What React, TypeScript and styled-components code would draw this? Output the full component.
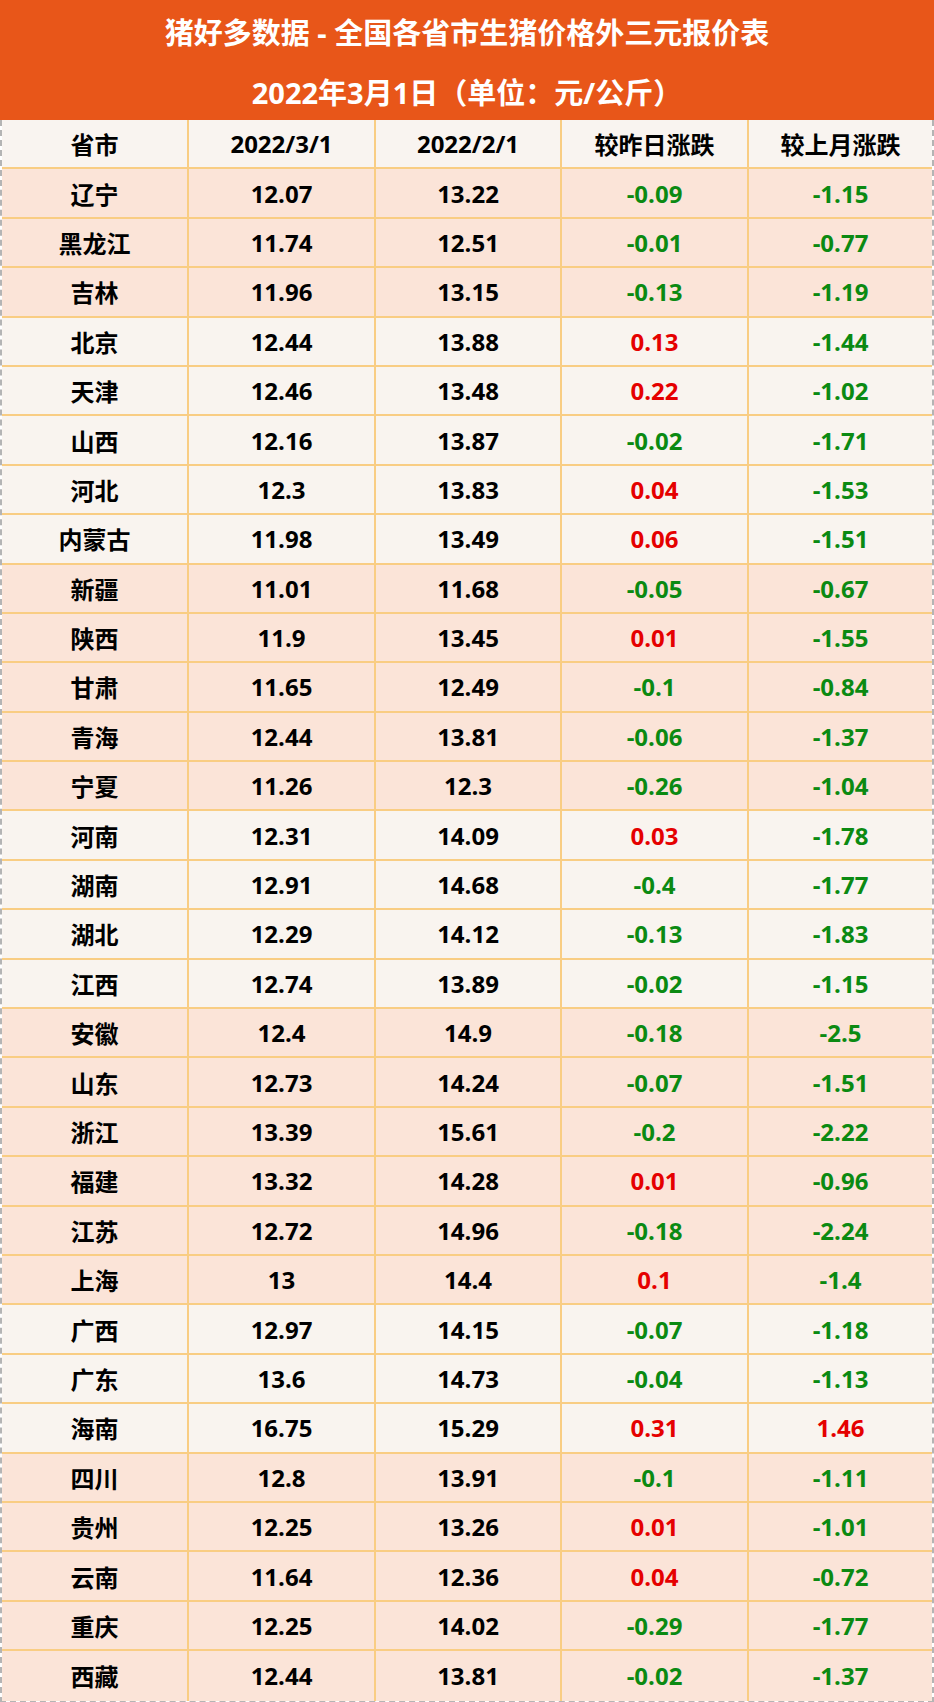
import React from "react";
import styled, { createGlobalStyle } from "styled-components";

interface PriceRow {
    name: string;
    march: string;
    feb: string;
    day: string;
    month: string;
    tone: "pink" | "light";
}

const GlobalStyle = createGlobalStyle`
    html, body {
        margin: 0;
        padding: 0;
        background: #ffffff;
    }
`;

const Page = styled.main`
    width: 934px;
    font-family: "Open Sans", "Noto Sans CJK SC", sans-serif;
    font-weight: 700;
`;

const Banner = styled.header`
    height: 120px;
    background: #e85619;
    color: #ffffff;
    display: flex;
    flex-direction: column;
    align-items: center;
`;

const BannerLine = styled.div<{ $h: number; $size: number }>`
    height: ${(p) => p.$h}px;
    font-size: ${(p) => p.$size}px;
    display: flex;
    align-items: center;
    justify-content: center;
    white-space: pre;
`;

const Table = styled.section`
    border-left: 2px dashed #b4b4b4;
    border-right: 2px dashed #b4b4b4;
    border-bottom: 2px dashed #b4b4b4;
    box-sizing: border-box;
`;

const Row = styled.div<{ $bg: string; $last?: boolean }>`
    display: grid;
    grid-template-columns: 185px 187px 186px 187px 185px;
    height: 49.4px;
    box-sizing: border-box;
    background: ${(p) => p.$bg};
    border-bottom: ${(p) => (p.$last ? "none" : "2px solid #f9cd83")};
`;

const Cell = styled.div<{ $color?: string }>`
    display: flex;
    align-items: center;
    justify-content: center;
    font-size: 24px;
    color: ${(p) => p.$color || "#000000"};
    & + & {
        border-left: 2px solid #f9cd83;
    }
`;

const colours = {
    pink: "#fbe4d8",
    light: "#f9f4ef",
};

const raw: [string, string, string, string, string][] = [
    ["辽宁", "12.07", "13.22", "-0.09", "-1.15"],
    ["黑龙江", "11.74", "12.51", "-0.01", "-0.77"],
    ["吉林", "11.96", "13.15", "-0.13", "-1.19"],
    ["北京", "12.44", "13.88", "0.13", "-1.44"],
    ["天津", "12.46", "13.48", "0.22", "-1.02"],
    ["山西", "12.16", "13.87", "-0.02", "-1.71"],
    ["河北", "12.3", "13.83", "0.04", "-1.53"],
    ["内蒙古", "11.98", "13.49", "0.06", "-1.51"],
    ["新疆", "11.01", "11.68", "-0.05", "-0.67"],
    ["陕西", "11.9", "13.45", "0.01", "-1.55"],
    ["甘肃", "11.65", "12.49", "-0.1", "-0.84"],
    ["青海", "12.44", "13.81", "-0.06", "-1.37"],
    ["宁夏", "11.26", "12.3", "-0.26", "-1.04"],
    ["河南", "12.31", "14.09", "0.03", "-1.78"],
    ["湖南", "12.91", "14.68", "-0.4", "-1.77"],
    ["湖北", "12.29", "14.12", "-0.13", "-1.83"],
    ["江西", "12.74", "13.89", "-0.02", "-1.15"],
    ["安徽", "12.4", "14.9", "-0.18", "-2.5"],
    ["山东", "12.73", "14.24", "-0.07", "-1.51"],
    ["浙江", "13.39", "15.61", "-0.2", "-2.22"],
    ["福建", "13.32", "14.28", "0.01", "-0.96"],
    ["江苏", "12.72", "14.96", "-0.18", "-2.24"],
    ["上海", "13", "14.4", "0.1", "-1.4"],
    ["广西", "12.97", "14.15", "-0.07", "-1.18"],
    ["广东", "13.6", "14.73", "-0.04", "-1.13"],
    ["海南", "16.75", "15.29", "0.31", "1.46"],
    ["四川", "12.8", "13.91", "-0.1", "-1.11"],
    ["贵州", "12.25", "13.26", "0.01", "-1.01"],
    ["云南", "11.64", "12.36", "0.04", "-0.72"],
    ["重庆", "12.25", "14.02", "-0.29", "-1.77"],
    ["西藏", "12.44", "13.81", "-0.02", "-1.37"],
];

// region groups: which rows sit on the lighter band
const lightRows = new Set(["北京", "天津", "山西", "河北", "内蒙古", "河南", "湖南", "湖北", "江西", "广西", "广东", "海南"]);

const rows: PriceRow[] = raw.map(([name, march, feb, day, month]) => ({
    name,
    march,
    feb,
    day,
    month,
    tone: lightRows.has(name) ? "light" : "pink",
}));

const changeColour = (v: string) => (v.startsWith("-") ? "#0b8a12" : "#e50000");

function App() {
    return (
        <Page>
            <GlobalStyle />
            <Banner>
                <BannerLine $h={62} $size={29}>猪好多数据 - 全国各省市生猪价格外三元报价表</BannerLine>
                <BannerLine $h={58} $size={29}>2022年3月1日（单位：元/公斤）</BannerLine>
            </Banner>
            <Table>
                <Row $bg="#f9f4f0">
                    <Cell>省市</Cell>
                    <Cell>2022/3/1</Cell>
                    <Cell>2022/2/1</Cell>
                    <Cell>较昨日涨跌</Cell>
                    <Cell>较上月涨跌</Cell>
                </Row>
                {rows.map((r, i) => (
                    <Row key={r.name} $bg={colours[r.tone]} $last={i === rows.length - 1}>
                        <Cell>{r.name}</Cell>
                        <Cell>{r.march}</Cell>
                        <Cell>{r.feb}</Cell>
                        <Cell $color={changeColour(r.day)}>{r.day}</Cell>
                        <Cell $color={changeColour(r.month)}>{r.month}</Cell>
                    </Row>
                ))}
            </Table>
        </Page>
    );
}

export default App;
